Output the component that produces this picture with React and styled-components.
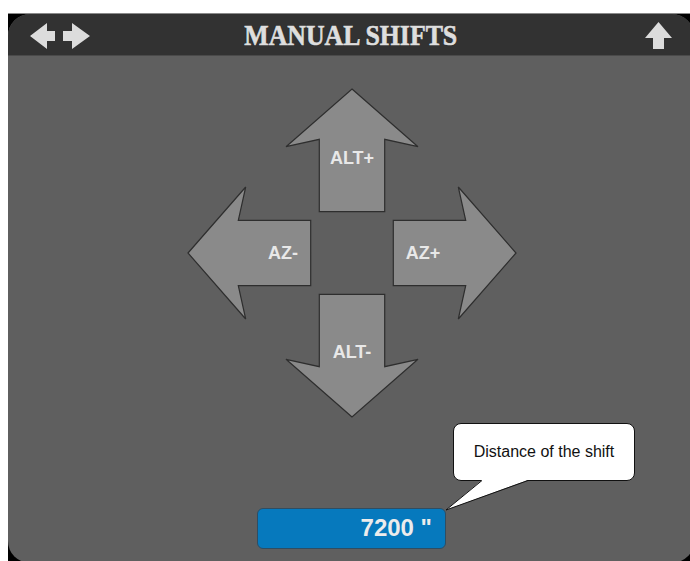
import styled, { createGlobalStyle } from 'styled-components'

const GlobalStyle = createGlobalStyle`
  html, body {
    margin: 0;
    padding: 0;
    background: #fff;
    overflow: hidden;
  }
`

// pad arrow geometry, drawn pointing up around the pad centre (0,0)
const ARROW_PATH = 'M0,-164 L66,-106.3 L32.7,-113.7 L32.7,-41.3 L-32.7,-41.3 L-32.7,-113.7 L-66,-106.3 Z'

const ARROWS = [
  { id: 'up', label: 'ALT+', angle: 0, tx: 0, ty: -95 },
  { id: 'left', label: 'AZ-', angle: -90, tx: -69, ty: 0 },
  { id: 'right', label: 'AZ+', angle: 90, tx: 71, ty: 0 },
  { id: 'down', label: 'ALT-', angle: 180, tx: 0, ty: 99 }
]

function PadArrow ({ label, angle, tx, ty }) {
  return (
    <g>
      <ArrowShape d={ARROW_PATH} transform={`rotate(${angle})`} />
      <ArrowLabel x={tx} y={ty}>{label}</ArrowLabel>
    </g>
  )
}

function HeaderIcon ({ kind }) {
  if (kind === 'left') {
    return (
      <IconSvg width='25' height='26' viewBox='0 0 25 26'>
        <polygon points='0,13 17,0 17,8 25,8 25,18 17,18 17,26' />
      </IconSvg>
    )
  }
  if (kind === 'right') {
    return (
      <IconSvg width='27' height='26' viewBox='0 0 27 26'>
        <polygon points='0,8 9,8 9,0 27,13 9,26 9,18 0,18' />
      </IconSvg>
    )
  }
  return (
    <IconSvg width='27' height='27' viewBox='0 0 27 27'>
      <polygon points='13.5,0 27,16 19,16 19,27 8,27 8,16 0,16' />
    </IconSvg>
  )
}

export default function App () {
  return (
    <>
      <GlobalStyle />
      <Screen>
        <Panel>
          <Header>
            <IconGroup>
              <HeaderIcon kind='left' />
              <HeaderIcon kind='right' />
            </IconGroup>
            <Title>MANUAL SHIFTS</Title>
            <IconGroup $end>
              <HeaderIcon kind='up' />
            </IconGroup>
          </Header>
          <Body>
            <Pad width='330' height='330' viewBox='-165 -165 330 330'>
              {ARROWS.map((a) => <PadArrow key={a.id} {...a} />)}
            </Pad>
            <ValueWrap>
              <ValueBox>7200 "</ValueBox>
              <Callout>
                <CalloutText>Distance of the shift</CalloutText>
                <CalloutTail width='84' height='32' viewBox='0 0 84 32'>
                  <polygon points='36,0 0,30 82,0' fill='#fff' stroke='none' />
                  <polyline points='36,0.5 0,30 82,0.5' fill='none' stroke='#111' strokeWidth='1' />
                </CalloutTail>
              </Callout>
            </ValueWrap>
          </Body>
        </Panel>
      </Screen>
    </>
  )
}

const Screen = styled.div`
  margin: 13px 0 0 8px;
  width: 700px;
  height: 560px;
  background: #000;
  border-top: 1px solid #8a8a8a;
`

const Panel = styled.div`
  width: 686px;
  height: 549px;
  border-radius: 22px;
  overflow: hidden;
  background: #5f5f5f;
  display: flex;
  flex-direction: column;
`

const Header = styled.div`
  height: 41px;
  flex: none;
  background: #323232;
  border-bottom: 1px solid #4a4a4a;
  display: grid;
  grid-template-columns: 1fr auto 1fr;
  align-items: center;
  padding: 0 22px 0 22px;
`

const IconGroup = styled.div`
  display: flex;
  gap: 8px;
  justify-content: ${(p) => (p.$end ? 'flex-end' : 'flex-start')};
  padding-top: ${(p) => (p.$end ? '1px' : '2px')};
`

const IconSvg = styled.svg`
  display: block;
  fill: #dcdcdc;
`

const Title = styled.div`
  font-family: "Liberation Serif", "Times New Roman", serif;
  font-weight: bold;
  font-size: 30px;
  line-height: 41px;
  color: #dedede;
  -webkit-text-stroke: 0.7px #dedede;
  transform: scaleX(0.86);
  text-shadow: 0 0 1px #000;
  white-space: nowrap;
`

const Body = styled.div`
  flex: 1;
  display: flex;
  flex-direction: column;
  align-items: center;
  padding-top: 32px;
  padding-left: 1px;
`

const Pad = styled.svg`
  display: block;
  overflow: visible;
`

const ArrowShape = styled.path`
  fill: #8a8a8a;
  stroke: #2e2e2e;
  stroke-width: 1.2;
  stroke-linejoin: miter;
`

const ArrowLabel = styled.text`
  font-family: "Liberation Sans", Arial, sans-serif;
  font-weight: bold;
  font-size: 18px;
  fill: #e8e8e8;
  text-anchor: middle;
  dominant-baseline: central;
`

const ValueWrap = styled.div`
  position: relative;
  margin-top: 90px;
`

const ValueBox = styled.div`
  box-sizing: border-box;
  width: 189px;
  height: 41px;
  border-radius: 6px;
  background: #0679bd;
  border: 1px solid #2f4d62;
  color: #ececec;
  font-family: "Liberation Sans", Arial, sans-serif;
  font-weight: bold;
  font-size: 24px;
  line-height: 38px;
  text-align: right;
  padding-right: 13px;
`

const Callout = styled.div`
  position: absolute;
  left: 196px;
  top: -85px;
  box-sizing: border-box;
  width: 182px;
  height: 58px;
  background: #fff;
  border: 1px solid #111;
  border-radius: 8px;
  display: flex;
  align-items: center;
  justify-content: center;
`

const CalloutText = styled.span`
  font-family: "Liberation Sans", Arial, sans-serif;
  font-size: 16px;
  color: #111;
  white-space: nowrap;
`

const CalloutTail = styled.svg`
  position: absolute;
  left: -8px;
  top: 56px;
  overflow: visible;
`
